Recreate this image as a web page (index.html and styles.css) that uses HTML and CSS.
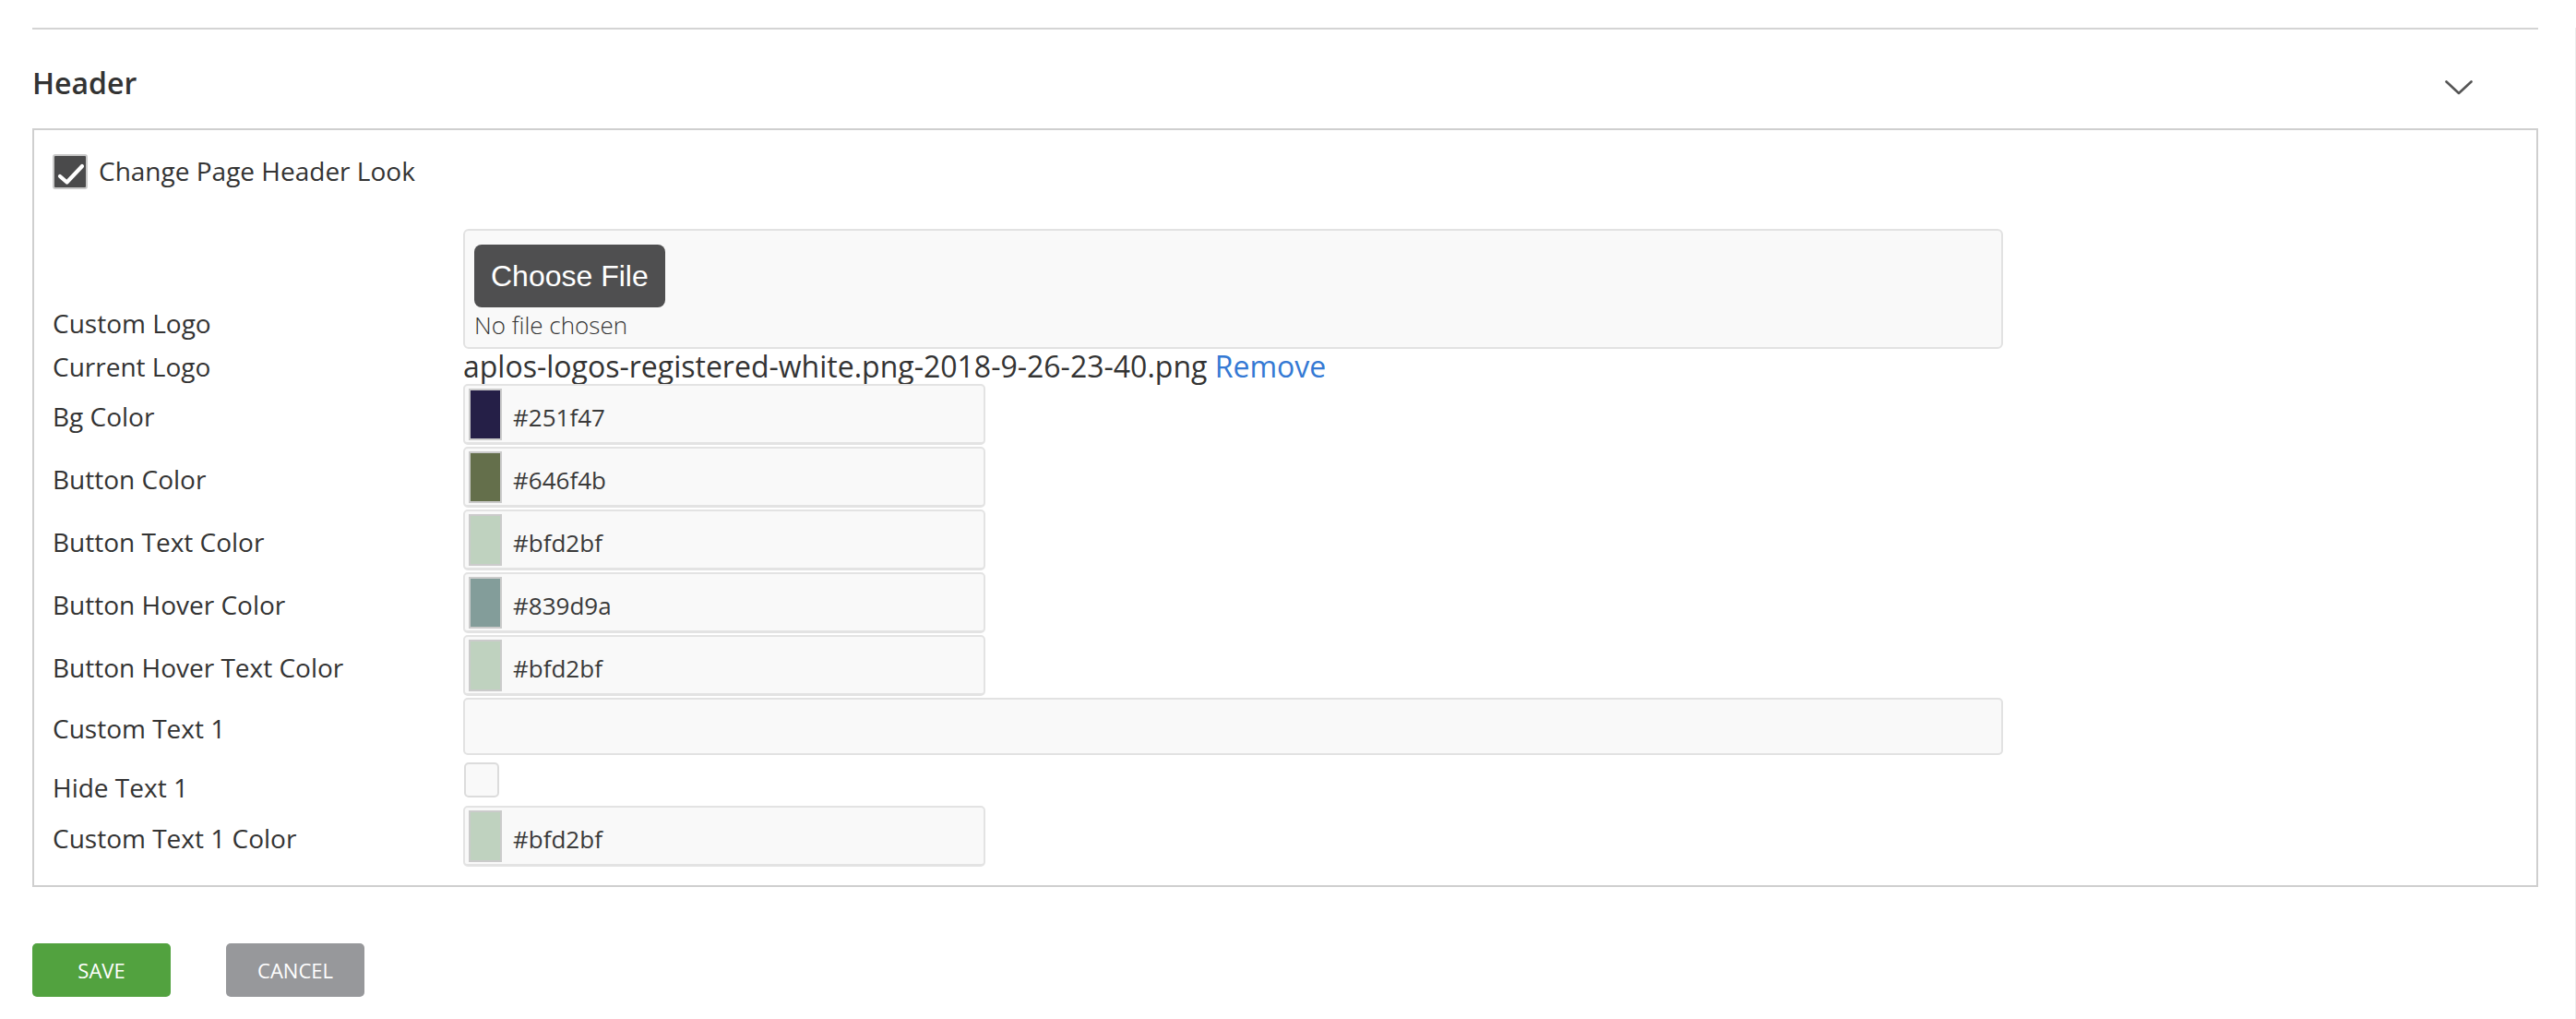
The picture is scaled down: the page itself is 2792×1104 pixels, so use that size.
FILE: index.html
```html
<!DOCTYPE html>
<html lang="en">
<head>
<meta charset="utf-8">
<title>Header settings</title>
<link rel="stylesheet" href="styles.css">
</head>
<body>
<div class="page">
  <div class="rule"></div>
  <div class="section-head">
    <h2 class="section-title">Header</h2>
    <svg class="chevron" width="30" height="16" viewBox="0 0 30 16" aria-hidden="true">
      <polyline points="1.5,1.5 15,14 28.5,1.5" fill="none" stroke="#555" stroke-width="2.6" stroke-linecap="round" stroke-linejoin="round"/>
    </svg>
  </div>

  <div class="panel">
    <div class="toggle">
      <span class="check-box">
        <svg width="34" height="34" viewBox="0 0 34 34" aria-hidden="true">
          <polyline points="6,22 13.5,28.5 30,11" fill="none" stroke="#fff" stroke-width="4.2" stroke-linecap="round" stroke-linejoin="round"/>
        </svg>
      </span>
      <span class="toggle-text">Change Page Header Look</span>
    </div>

    <div class="form">
      <div class="row row-file">
        <div class="label label-file">Custom Logo</div>
        <div class="file-field">
          <span class="file-btn">Choose File</span>
          <span class="file-status">No file chosen</span>
        </div>
      </div>

      <div class="row row-current">
        <div class="label">Current Logo</div>
        <div class="current-file">aplos-logos-registered-white.png-2018-9-26-23-40.png <a class="remove-link" href="#">Remove</a></div>
      </div>

      <div class="row">
        <div class="label label-field">Bg Color</div>
        <div class="color-field"><span class="swatch" style="background:#251f47"></span><span class="hex">#251f47</span></div>
      </div>

      <div class="row row-tight">
        <div class="label label-field">Button Color</div>
        <div class="color-field"><span class="swatch" style="background:#646f4b"></span><span class="hex">#646f4b</span></div>
      </div>

      <div class="row row-tight">
        <div class="label label-field">Button Text Color</div>
        <div class="color-field"><span class="swatch" style="background:#bfd2bf"></span><span class="hex">#bfd2bf</span></div>
      </div>

      <div class="row row-tight">
        <div class="label label-field">Button Hover Color</div>
        <div class="color-field"><span class="swatch" style="background:#839d9a"></span><span class="hex">#839d9a</span></div>
      </div>

      <div class="row row-tight">
        <div class="label label-field">Button Hover Text Color</div>
        <div class="color-field"><span class="swatch" style="background:#bfd2bf"></span><span class="hex">#bfd2bf</span></div>
      </div>

      <div class="row row-tight">
        <div class="label label-field">Custom Text 1</div>
        <div class="text-field"></div>
      </div>

      <div class="row row-hide">
        <div class="label">Hide Text 1</div>
        <span class="small-check"></span>
      </div>

      <div class="row">
        <div class="label label-field">Custom Text 1 Color</div>
        <div class="color-field"><span class="swatch" style="background:#bfd2bf"></span><span class="hex">#bfd2bf</span></div>
      </div>
    </div>
  </div>

  <div class="actions">
    <button class="btn btn-save" type="button">SAVE</button>
    <button class="btn btn-cancel" type="button">CANCEL</button>
  </div>
</div>
</body>
</html>
```

FILE: styles.css
```css
* {
  box-sizing: border-box;
}

html,
body {
  margin: 0;
  padding: 0;
  background: #ffffff;
}

body {
  font-family: "Open Sans", "Liberation Sans", Arial, sans-serif;
  color: #333333;
}

.page {
  min-height: 1104px;
  padding: 0 40px 0 35px;
  border-right: 1px solid #ececec;
}

.rule {
  margin-top: 30px;
  border-top: 2px solid #d4d4d4;
}

.section-head {
  display: flex;
  justify-content: space-between;
  align-items: flex-start;
}

.section-title {
  margin: 0;
  padding: 38px 0 29px;
  font-size: 32px;
  line-height: 40px;
  font-weight: 600;
  color: #333333;
}

.chevron {
  display: block;
  margin-top: 55px;
  margin-right: 71px;
}

.panel {
  border: 2px solid #cfcfcf;
  padding: 26px 20px 20px 20px;
}

.toggle {
  display: flex;
  align-items: center;
  gap: 12px;
  height: 38px;
}

.check-box {
  width: 38px;
  height: 38px;
  flex-shrink: 0;
  display: flex;
  align-items: center;
  justify-content: center;
  background: #4a4a4b;
  border: 2px solid #c9c9c9;
  border-radius: 3px;
}

.check-box svg {
  display: block;
}

.toggle-text {
  font-size: 28px;
  line-height: 40px;
  margin-top: -3px;
}

.form {
  margin-top: 43px;
}

.row {
  display: flex;
  align-items: center;
}

.row-tight {
  margin-top: 2px;
}

.label {
  width: 445px;
  flex-shrink: 0;
  font-size: 28px;
  line-height: 40px;
  color: #333333;
}

.label-field {
  padding-top: 4px;
}

.row-file {
  align-items: flex-end;
}

.label-file {
  margin-bottom: 8px;
}

.file-field {
  width: 1669px;
  height: 130px;
  display: flex;
  flex-direction: column;
  align-items: flex-start;
  padding: 15px 10px 7px;
  background: #f9f9f9;
  border: 2px solid #e2e2e2;
  border-radius: 6px;
}

.file-btn {
  display: block;
  height: 68px;
  padding: 0 18px;
  background: #4f4f50;
  color: #ffffff;
  border-radius: 8px;
  font-family: "Liberation Sans", Arial, sans-serif;
  font-size: 32px;
  line-height: 68px;
}

.file-status {
  display: block;
  margin-top: 2px;
  font-size: 26px;
  line-height: 34px;
  font-weight: 300;
  color: #333333;
}

.row-current {
  height: 38px;
}

.current-file {
  font-size: 32px;
  line-height: 38px;
  color: #333333;
  white-space: nowrap;
}

.remove-link {
  color: #3479d4;
  text-decoration: none;
}

.color-field {
  width: 566px;
  height: 66px;
  display: flex;
  align-items: center;
  padding-left: 4px;
  background: #f9f9f9;
  border: 2px solid #e3e3e3;
  border-bottom-width: 3px;
  border-radius: 5px;
}

.swatch {
  display: block;
  width: 36px;
  height: 56px;
  flex-shrink: 0;
  border: 2px solid #cbcbcb;
  margin-top: 1px;
}

.hex {
  margin-left: 12px;
  margin-top: 7px;
  font-size: 26px;
  line-height: 36px;
  color: #3a3a3a;
}

.text-field {
  width: 1669px;
  height: 62px;
  background: #f9f9f9;
  border: 2px solid #e2e2e2;
  border-radius: 5px;
}

.row-hide {
  align-items: baseline;
  margin-top: 8px;
}

.small-check {
  display: inline-block;
  width: 38px;
  height: 38px;
  margin-left: 1px;
  background: #f9f9f9;
  border: 2px solid #dcdcdc;
  border-radius: 5px;
}

.actions {
  display: flex;
  gap: 60px;
  margin-top: 61px;
}

.btn {
  width: 150px;
  height: 58px;
  border: none;
  border-radius: 5px;
  color: #ffffff;
  font-family: "Open Sans", "Liberation Sans", Arial, sans-serif;
  font-size: 22px;
  line-height: 58px;
  padding: 0;
  text-align: center;
  cursor: pointer;
}

.btn-save {
  background: #52a23f;
}

.btn-cancel {
  background: #97989b;
}
```
